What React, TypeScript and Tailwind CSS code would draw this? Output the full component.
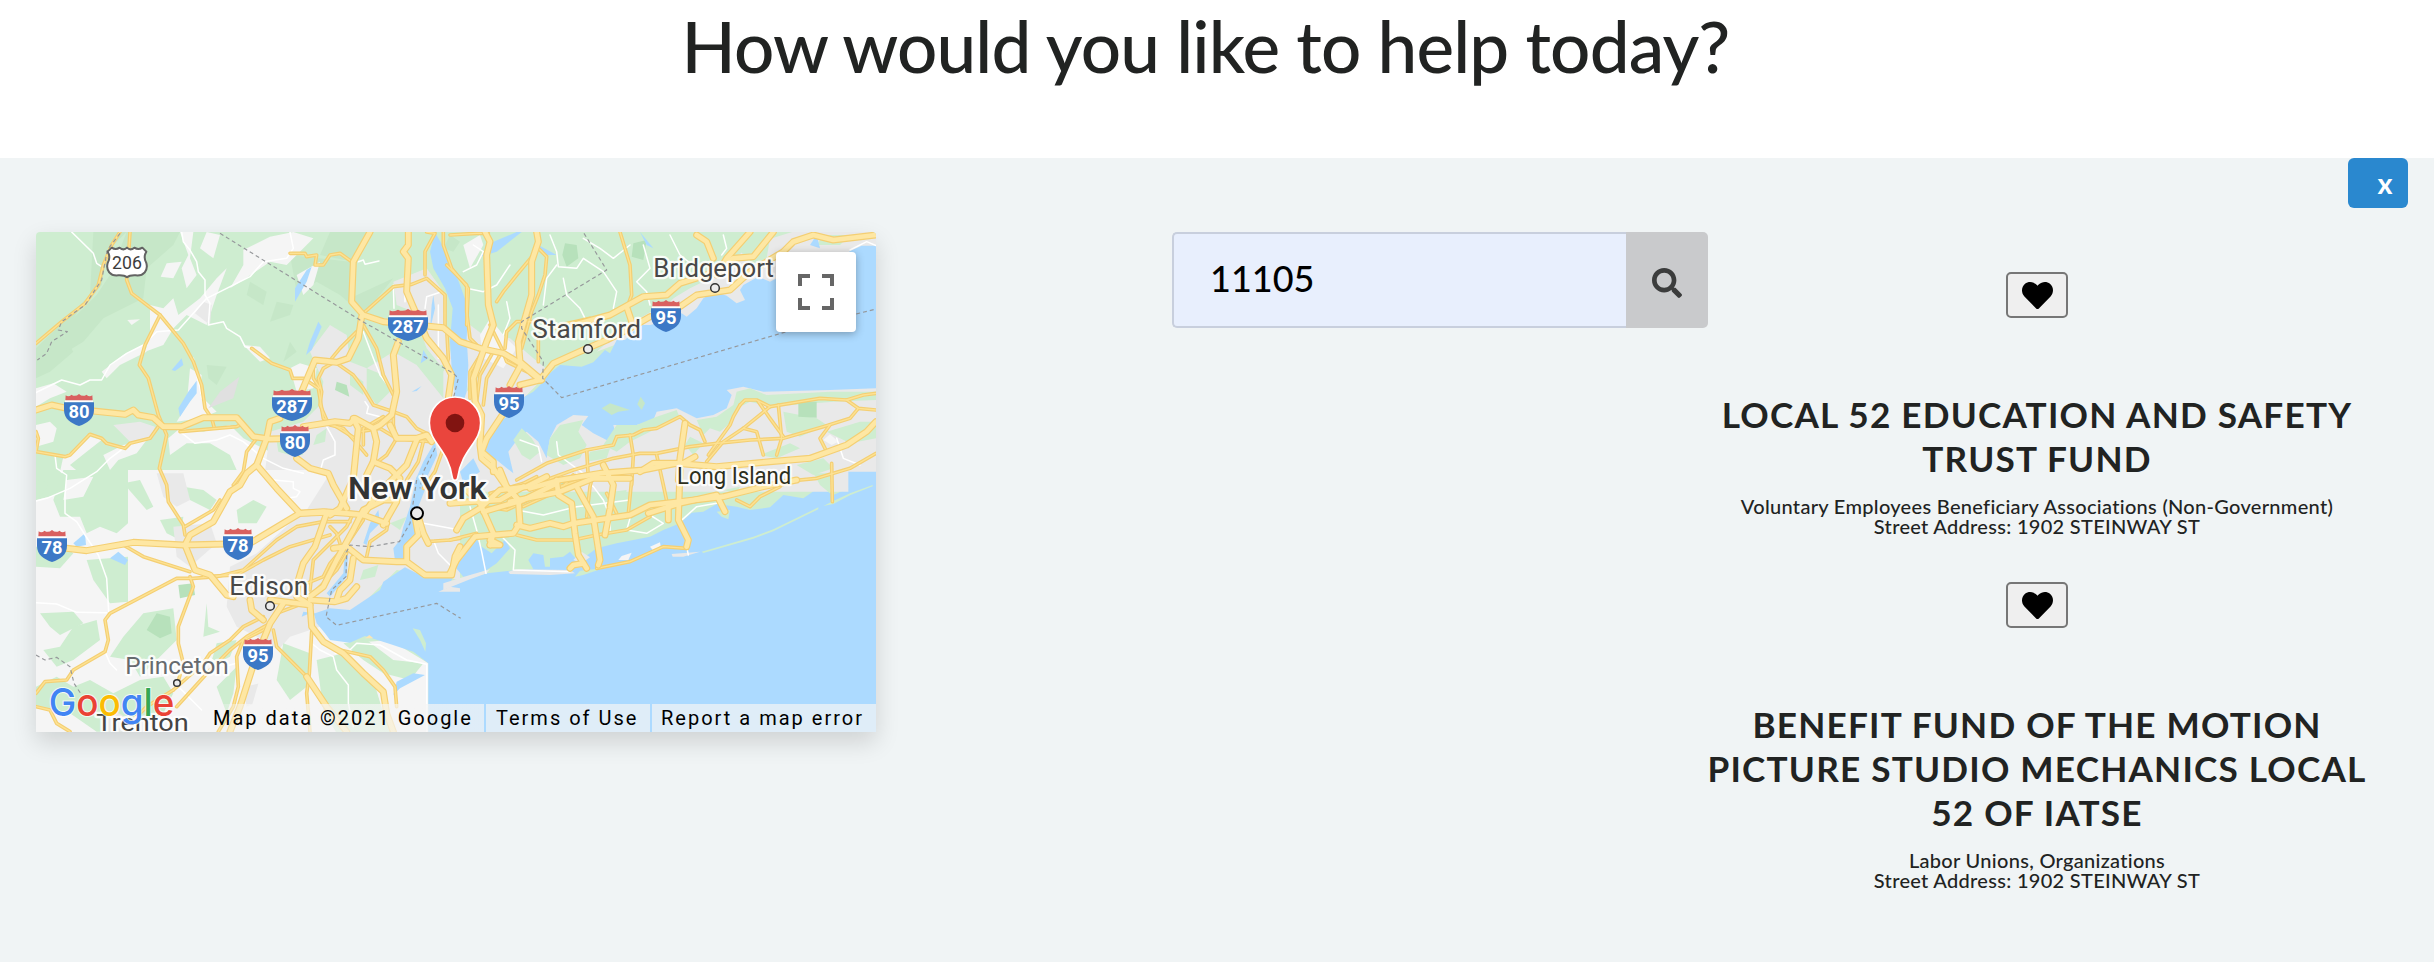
import React from "react";
import { FaHeart, FaSearch } from "react-icons/fa";

type Offset = [number, number];

// The map is drawn in four quadrants that share one coordinate space.
const NW: Offset = [0, 0];
const NE: Offset = [1260, 0];
const SW: Offset = [0, 765];
const SE: Offset = [1260, 765];

type Shape = { at: Offset; fill: string; pts: string };
type Line = { at: Offset; pts: string };

const GREEN = "#ceedd0";
const GREEN2 = "#c6e7c8";
const GREEN3 = "#b7e1bb";
const LIGHT = "#f5f5f5";
const URBAN = "#e9e9e9";
const WATER = "#acdaff";

const land: Shape[] = [
  { at: NW, fill: GREEN2, pts: "190,21 290,21 230,80 215,180 150,250 100,330 130,380 60,440 18,460 18,370 100,290 180,210" },
  { at: NW, fill: GREEN2, pts: "290,21 450,21 430,60 350,130 340,220 220,280 160,350 110,380 100,310 200,210 240,150" },
  { at: NW, fill: GREEN2, pts: "780,90 960,110 960,220 1090,160 1000,270 930,210 860,170 800,200" },
  { at: NW, fill: GREEN2, pts: "900,21 1030,21 970,110 870,90" },
  { at: NW, fill: GREEN2, pts: "660,170 710,200 700,240 650,210" },
  { at: NW, fill: GREEN2, pts: "740,230 790,240 780,270 720,290" },
  { at: NW, fill: GREEN2, pts: "780,350 800,380 760,410" },
  { at: NW, fill: GREEN2, pts: "530,420 590,425 560,480 535,460" },
  { at: NW, fill: LIGHT, pts: "450,21 490,21 480,100 500,150 470,190 455,130 475,90" },
  { at: NW, fill: LIGHT, pts: "530,21 570,30 550,100 510,70" },
  { at: NW, fill: LIGHT, pts: "410,115 455,110 430,160 392,155" },
  { at: NW, fill: LIGHT, pts: "360,240 400,250 430,220 445,270 510,220 560,160 590,130 560,210 530,300 470,270 420,320 360,350" },
  { at: NW, fill: URBAN, pts: "520,230 545,240 540,300 495,265" },
  { at: NW, fill: LIGHT, pts: "640,75 720,35 790,21 850,40 800,90 770,120 720,110 640,165 600,190 640,120" },
  { at: NW, fill: LIGHT, pts: "292,285 330,283 305,300" },
  { at: NW, fill: LIGHT, pts: "280,390 340,360 350,380 270,420 230,460 215,440" },
  { at: NW, fill: LIGHT, pts: "380,300 430,310 400,360 345,380 360,330" },
  { at: NW, fill: LIGHT, pts: "480,430 515,450 510,510 560,560 510,580 440,590 470,540" },
  { at: NW, fill: "#e0e0e0", pts: "628,455 610,520 535,550 570,500" },
  { at: NW, fill: LIGHT, pts: "18,490 70,475 110,500 60,520 18,545" },
  { at: NW, fill: LIGHT, pts: "18,600 60,590 80,610 70,650 18,665" },
  { at: NW, fill: LIGHT, pts: "100,695 150,665 180,635 215,645 170,680 120,720 150,745 120,765 90,740" },
  { at: NW, fill: LIGHT, pts: "220,690 280,660 350,645 320,685 265,705 240,735" },
  { at: NW, fill: URBAN, pts: "250,600 330,590 375,605 365,635 300,650" },
  { at: NW, fill: LIGHT, pts: "415,640 450,610 520,620 600,600 640,640 720,680 800,690 850,720 900,765 290,765 290,738 620,735 600,690 540,655 470,655 420,690" },
  { at: NW, fill: LIGHT, pts: "640,360 690,365 720,400 690,410" },
  { at: NW, fill: LIGHT, pts: "780,430 810,415 860,430 850,490 800,500" },
  { at: NW, fill: LIGHT, pts: "800,150 870,110 850,180 820,210" },
  { at: NW, fill: URBAN, pts: "840,380 900,300 950,330 960,410 1010,430 1090,380 1160,420 1240,520 1290,560 1290,780 700,780 720,620 820,590 870,540 880,470" },
  { at: NW, fill: URBAN, pts: "1090,170 1140,150 1190,130 1240,200 1245,300 1270,420 1230,420 1190,370 1150,260 1100,240" },
  { at: NW, fill: GREEN3, pts: "920,470 950,480 958,515 915,495" },
  { at: NW, fill: GREEN, pts: "1010,430 1060,450 1080,500 1040,540 1010,500" },
  { at: NW, fill: GREEN, pts: "960,440 1000,470 1000,510 960,480" },
  { at: NW, fill: GREEN, pts: "740,650 800,660 820,690 780,690 745,680" },
  { at: NW, fill: GREEN, pts: "860,630 890,610 885,650 850,660" },
  { at: SW, fill: LIGHT, pts: "18,60 100,40 160,60 290,-30 900,-30 900,765 18,765" },
  { at: SW, fill: GREEN, pts: "100,-30 294,-30 294,130 260,160 210,140 170,160 150,110 90,110 70,60" },
  { at: SW, fill: GREEN, pts: "18,0 60,10 20,60" },
  { at: SW, fill: LIGHT, pts: "110,0 190,-10 160,50 100,60" },
  { at: SW, fill: GREEN, pts: "18,200 90,190 130,220 90,265 18,260" },
  { at: SW, fill: GREEN, pts: "170,240 294,230 294,365 240,370 190,300" },
  { at: SW, fill: GREEN, pts: "30,400 130,395 160,430 90,465 60,440" },
  { at: SW, fill: GREEN, pts: "130,440 200,420 210,480 130,540 80,560 40,510 90,500" },
  { at: SW, fill: GREEN, pts: "340,400 430,385 440,480 380,540 330,590 300,540 240,530 280,470" },
  { at: SW, fill: GREEN3, pts: "380,400 420,410 425,460 390,475 350,450" },
  { at: SW, fill: GREEN3, pts: "445,315 490,310 495,345 450,355" },
  { at: SW, fill: GREEN, pts: "390,120 460,110 450,180 410,160" },
  { at: SW, fill: GREEN, pts: "280,10 330,0 370,80 350,90" },
  { at: SW, fill: GREEN, pts: "460,20 520,30 560,60 540,90 480,60" },
  { at: SW, fill: GREEN, pts: "620,90 670,60 710,80 680,130 625,130" },
  { at: SW, fill: GREEN, pts: "720,200 800,180 800,240 760,260 730,230" },
  { at: SW, fill: GREEN, pts: "530,370 535,440 570,455 520,470" },
  { at: SW, fill: GREEN, pts: "560,490 620,480 600,530 540,560" },
  { at: SW, fill: GREEN, pts: "18,620 80,590 130,620 180,600 250,640 330,600 400,590 430,640 400,700 300,755 200,755 120,700 18,680" },
  { at: SW, fill: URBAN, pts: "600,260 680,220 780,130 830,90 900,-20 1290,-20 1290,300 1100,270 1000,370 880,440 820,520 790,540 700,480 620,440 590,380" },
  { at: SW, fill: URBAN, pts: "380,-20 460,-20 480,60 440,80 400,50" },
  { at: SW, fill: URBAN, pts: "430,140 540,130 560,190 480,260 440,230" },
  { at: SW, fill: URBAN, pts: "220,720 250,690 300,720 360,700 380,755 230,755" },
  { at: SW, fill: URBAN, pts: "640,620 690,610 700,660 650,680" },
  { at: SW, fill: LIGHT, pts: "780,470 870,440 960,490 1080,480 1195,550 1195,765 640,765 700,560" },
  { at: SW, fill: GREEN, pts: "760,490 840,520 830,620 780,660 740,600" },
  { at: SW, fill: GREEN, pts: "860,540 940,520 1030,600 1060,700 1100,760 920,760 880,690" },
  { at: SW, fill: GREEN, pts: "940,490 1010,480 1090,540 1180,550 1140,600 1060,580 1000,540" },
  { at: SW, fill: GREEN, pts: "560,620 620,560 610,640 590,700" },
  { at: SW, fill: GREEN, pts: "1000,270 1045,255 1035,290 990,300" },
  { at: SW, fill: GREEN, pts: "1080,130 1130,110 1110,150" },
  { at: NE, fill: URBAN, pts: "-20,440 60,300 100,330 180,340 250,400 300,440 200,540 110,640 140,790 -20,790" },
  { at: NE, fill: LIGHT, pts: "90,330 120,280 160,330 200,370 160,430 100,400" },
  { at: NE, fill: LIGHT, pts: "40,60 90,30 100,60 60,130" },
  { at: NE, fill: GREEN2, pts: "0,30 30,50 10,80 -20,70" },
  { at: NE, fill: GREEN3, pts: "345,55 380,60 385,100 350,125 337,90" },
  { at: NE, fill: GREEN3, pts: "550,55 590,45 580,105 545,95" },
  { at: NE, fill: GREEN, pts: "60,440 90,430 80,470 50,500" },
  { at: NE, fill: URBAN, pts: "440,380 520,310 620,250 720,190 800,150 900,60 1030,20 1278,21 1278,80 900,230 600,320" },
  { at: NE, fill: GREEN, pts: "860,60 960,40 950,100 900,120" },
  { at: NE, fill: GREEN, pts: "560,240 650,200 700,190 660,230 590,260" },
  { at: NE, fill: GREEN, pts: "1120,30 1200,30 1170,60 1100,60" },
];

const water: Shape[] = [
  { at: NE, fill: WATER, pts: "1278,62 1235,62 1200,78 1180,98 1130,100 1040,130 960,170 925,155 880,180 870,195 885,225 860,235 830,212 795,200 760,220 740,250 710,275 695,265 640,290 600,300 570,300 545,325 525,345 500,345 480,385 465,375 430,412 395,425 330,420 300,445 280,470 250,500 215,520 190,560 150,590 125,625 108,640 105,680 140,705 150,740 190,765 250,765 290,790 1278,790" },
  { at: NE, fill: WATER, pts: "-45,21 -60,80 -50,130 -15,190 8,250 0,350 5,430 15,510 30,560 50,500 55,420 50,340 55,250 30,180 -5,90 -35,40" },
  { at: NE, fill: WATER, pts: "90,95 120,55 200,21 215,21 140,80" },
  { at: NE, fill: WATER, pts: "265,60 320,90 290,90 260,75" },
  { at: NE, fill: WATER, pts: "570,21 610,70 590,60" },
  { at: NE, fill: WATER, pts: "1080,60 1100,30 1110,70" },
  { at: NW, fill: WATER, pts: "845,125 830,170 795,230 795,190 830,135" },
  { at: NW, fill: WATER, pts: "865,290 875,305 845,375 828,390 840,350" },
  { at: NW, fill: WATER, pts: "425,435 455,400 460,420 435,438" },
  { at: NW, fill: WATER, pts: "500,467 500,505 480,530 450,575 445,550 475,500" },
  { at: NW, fill: WATER, pts: "1210,210 1215,250 1200,315 1205,240" },
  { at: NW, fill: WATER, pts: "1180,375 1195,400 1172,415" },
  { at: NW, fill: WATER, pts: "1145,500 1175,483 1160,498" },
  { at: NW, fill: WATER, pts: "1215,650 1222,690 1180,780 1150,780 1180,710" },
  { at: NW, fill: WATER, pts: "1290,740 1330,700 1350,740 1300,775" },
  { at: NW, fill: WATER, pts: "1145,660 1160,670 1140,725 1130,700" },
  { at: SW, fill: WATER, pts: "130,190 165,160 168,195 140,200" },
  { at: SW, fill: WATER, pts: "240,235 265,215 294,240 285,255" },
  { at: SW, fill: WATER, pts: "1160,-10 1200,-10 1165,80 1175,150 1140,200 1140,245 1095,242 1090,205 1110,180 1120,140 1140,80" },
  { at: SW, fill: WATER, pts: "1045,90 1050,130 1020,160 1010,195 1000,190 1020,130" },
  { at: SW, fill: WATER, pts: "945,210 955,210 950,290 900,350 890,340 940,280" },
  { at: SW, fill: WATER, pts: "1100,605 1150,580 1185,585 1110,625 1090,645" },
  { at: SW, fill: WATER, pts: "1125,262 1180,290 1270,290 1260,310 1340,310 1400,350 1400,800 1195,800 1195,550 1150,515 1080,492 1005,468 960,488 900,480 885,460 860,430 850,395 815,410 820,395 855,400 900,385 960,390 1050,330 1060,305" },
  { at: SE, fill: WATER, pts: "1278,-40 1195,-30 1195,25 1150,45 1110,20 1060,55 1000,45 960,82 900,90 860,80 800,72 760,95 725,98 690,130 640,150 600,170 500,190 440,205 385,245 360,215 340,230 300,235 300,260 285,260 280,225 250,220 235,240 250,268 180,272 110,280 60,295 -20,325 -20,765 1278,765" },
  { at: SE, fill: WATER, pts: "30,200 75,170 95,200 125,220 165,180 180,205 140,250 110,270 60,290 40,290 15,260" },
];

const islands: Shape[] = [
  { at: NE, fill: URBAN, pts: "175,680 205,640 230,620 265,650 290,700 300,640 320,600 370,570 415,573 395,600 430,625 480,650 500,640 490,600 560,600 610,585 620,560 680,550 740,580 790,570 830,550 845,510 830,495 880,485 940,500 1140,495 1278,490 1278,740 1195,740 1195,800 100,800 140,705 190,745" },
  { at: NE, fill: GREEN, pts: "300,640 330,600 400,585 385,620 410,660 390,700 340,720 290,690" },
  { at: NE, fill: GREEN, pts: "190,645 215,610 245,640 270,680 240,705 215,690" },
  { at: NE, fill: GREEN2, pts: "455,550 480,535 540,555 505,560 485,570" },
  { at: NE, fill: GREEN2, pts: "572,515 585,535 575,555 562,538" },
  { at: NE, fill: GREEN, pts: "500,600 560,600 620,575 680,555 690,580 600,620 540,650 500,680 460,660" },
  { at: NE, fill: GREEN, pts: "740,585 800,575 850,540 860,500 900,490 950,510 1140,500 1278,500 1278,525 1150,530 960,545 900,530 870,545 845,590 810,620 780,610 760,630" },
  { at: NE, fill: GREEN, pts: "1000,560 1100,580 1130,600 1050,635 1010,620" },
  { at: NE, fill: GREEN, pts: "720,635 760,655 730,690 705,660" },
  { at: NE, fill: GREEN, pts: "930,690 1020,655 1050,670 980,700" },
  { at: NE, fill: GREEN3, pts: "1045,530 1100,530 1100,578 1045,575" },
  { at: NE, fill: GREEN, pts: "420,680 480,670 470,700 410,710" },
  { at: NE, fill: GREEN, pts: "1130,620 1230,590 1278,590 1278,640 1200,655" },
  { at: NE, fill: LIGHT, pts: "1120,645 1140,628 1165,650 1145,660" },
  { at: NE, fill: GREEN, pts: "1040,720 1120,700 1150,730 1090,750" },
  { at: SE, fill: GREEN3, pts: "340,-5 380,-10 365,20 330,20" },
  { at: SE, fill: GREEN, pts: "490,35 530,30 525,55 500,58" },
  { at: SE, fill: GREEN, pts: "800,95 840,90 835,118 815,110" },
  { at: SE, fill: GREEN, pts: "1090,-20 1140,-20 1140,40 1110,15" },
  { at: SE, fill: GREEN, pts: "820,30 870,20 860,40" },
  { at: SE, fill: URBAN, pts: "-20,310 60,285 120,268 110,280 60,298 -20,330" },
  { at: SE, fill: URBAN, pts: "175,275 200,268 360,270 375,280 300,285 180,282" },
  { at: SE, fill: GREEN, pts: "375,290 390,272 430,268 460,265 400,285" },
  { at: SE, fill: LIGHT, pts: "600,200 630,187 632,197 610,212" },
  { at: SE, fill: LIGHT, pts: "505,240 515,228 545,218 535,240" },
  { at: SE, fill: URBAN, pts: "370,240 395,215 420,232 395,250" },
  { at: SE, fill: URBAN, pts: "665,222 750,215 700,230 668,230" },
  { at: SE, fill: GREEN, pts: "755,215 910,170 970,148 1105,82 1105,88 970,154 910,176 760,219" },
  { at: SE, fill: GREEN, pts: "1120,78 1145,65 1200,40 1268,15 1268,19 1200,46 1150,72" },
  { at: SW, fill: GREEN, pts: "1148,445 1170,450 1188,490 1186,515 1170,480" },
  { at: SW, fill: URBAN, pts: "1225,335 1260,320 1290,325 1290,335" },
  { at: SW, fill: "#fbe5b5", pts: "1005,475 1018,465 1030,475" },
];

const whiteRoads: Line[] = [
  { at: NW, pts: "125,21 190,85 200,115 215,125" },
  { at: NW, pts: "455,21 460,50 480,75 500,110 505,140 525,165 525,210 540,235 535,300 580,290 590,310 630,335 645,365 665,370" },
  { at: NW, pts: "700,110 660,155 590,190 530,220 490,265 445,315 380,320 340,360 290,385 240,420 215,465 180,465 150,480 95,465 18,503" },
  { at: NW, pts: "700,110 770,100 790,70 780,21" },
  { at: NW, pts: "985,110 1000,105 1005,118 1047,108" },
  { at: NW, pts: "490,400 500,450 510,490 515,520" },
  { at: NW, pts: "1090,180 1092,250" },
  { at: NW, pts: "1125,170 1125,230" },
  { at: NW, pts: "1185,250 1190,215 1235,200" },
  { at: NW, pts: "1225,240 1225,400" },
  { at: NW, pts: "1000,320 1030,400 1050,450 1080,490" },
  { at: NW, pts: "450,620 495,655 560,645 600,630 640,650 700,700 760,730 820,745" },
  { at: NW, pts: "890,605 915,650 915,690 880,705 870,740" },
  { at: NW, pts: "75,690 80,730 110,750 105,810 105,865 140,890 165,930 205,990 230,1060 236,1160" },
  { at: NW, pts: "280,670 240,700 200,740 120,790 50,820 18,828" },
  { at: NW, pts: "1005,530 1015,545 1010,565 1050,575 1055,590" },
  { at: SW, pts: "18,368 80,372 140,397 230,398" },
  { at: SW, pts: "225,515 240,550 260,570" },
  { at: SW, pts: "450,625 515,690" },
  { at: SW, pts: "730,0 790,5 790,25 810,35 800,50 770,55" },
  { at: SW, pts: "845,490 870,510 910,530 920,570 955,615 955,670 970,740" },
  { at: SW, pts: "915,520 950,520 980,490 1050,495 1130,540 1190,553 1190,765" },
  { at: SW, pts: "540,535 580,560 620,550" },
  { at: SW, pts: "1180,130 1290,150" },
  { at: SW, pts: "1210,180 1225,220 1260,255" },
  { at: NE, pts: "300,30 320,80 325,125 380,130 400,100 460,140" },
  { at: NE, pts: "320,120 290,160 280,240" },
  { at: NE, pts: "340,160 350,210 390,250 410,290" },
  { at: NE, pts: "400,40 450,70 490,100 540,60" },
  { at: NE, pts: "580,60 600,130 560,170 590,200 600,240" },
  { at: NE, pts: "660,30 690,90 740,130" },
  { at: NE, pts: "460,140 500,200 490,250" },
  { at: NE, pts: "40,140 80,120 100,80 70,60" },
  { at: NE, pts: "50,190 100,200 140,180 180,120" },
  { at: NE, pts: "170,230 180,280 160,330" },
  { at: NE, pts: "210,645 265,665 275,710" },
  { at: NE, pts: "320,650 325,690 400,745" },
  { at: NE, pts: "1160,640 1180,700 1230,720" },
  { at: NE, pts: "1200,75 1250,50 1278,62" },
  { at: NE, pts: "820,30 830,70 815,90" },
  { at: SE, pts: "200,90 280,105 380,80 540,60" },
  { at: SE, pts: "380,-20 430,20 460,60 480,110 480,160" },
  { at: SE, pts: "60,80 80,150 95,215 108,280" },
  { at: SE, pts: "160,175 195,210 190,270 360,275" },
  { at: SE, pts: "540,115 530,150 590,160 640,130 600,105" },
  { at: SE, pts: "715,225 710,200" },
  { at: SE, pts: "690,125 740,80 800,70" },
];

const minorRoads: Line[] = [
  { at: NW, pts: "270,21 245,60 220,120 205,180 165,235 95,290 18,355" },
  { at: NW, pts: "300,21 295,100 290,165 305,205 390,270 345,360 328,420 355,460 385,570 410,630 388,730 410,780 415,830 460,900 465,930" },
  { at: NW, pts: "390,270 460,355 490,410 515,480 525,550 545,580 552,605" },
  { at: NW, pts: "665,370 725,415 780,435 788,460 820,460 865,490 880,580 975,640" },
  { at: NW, pts: "780,85 825,85 830,95 860,90 855,120 880,120 900,90 930,85 965,110" },
  { at: NW, pts: "18,620 25,640 18,680 105,695 120,690 180,628 215,640 230,655 285,670 300,655 360,640 385,605" },
  { at: NW, pts: "1000,265 1090,185 1145,178 1190,160 1245,210 1245,305" },
  { at: NW, pts: "980,320 930,370 905,400" },
  { at: NW, pts: "1000,300 1040,370 1060,450 1090,510" },
  { at: NW, pts: "920,415 970,450 1000,490 1030,540 1090,560 1130,575 1160,610 1190,625" },
  { at: NW, pts: "850,410 850,460 870,490" },
  { at: NW, pts: "915,410 880,430 865,460 875,500 870,540 890,585" },
  { at: NW, pts: "450,620 560,610 620,605 640,595" },
  { at: NW, pts: "680,640 650,680 640,740 610,780" },
  { at: NW, pts: "900,600 940,610 985,660 1010,690" },
  { at: NW, pts: "990,620 1050,610 1100,640 1200,650" },
  { at: NW, pts: "1090,560 1090,600 1100,640 1070,690 1030,720" },
  { at: NW, pts: "1060,575 1000,610 1000,660" },
  { at: NW, pts: "1190,21 1215,25 1185,80 1185,150" },
  { at: NW, pts: "1240,21 1240,60 1265,130 1290,160 1315,190 1310,300" },
  { at: NW, pts: "1250,310 1255,400 1250,420" },
  { at: NW, pts: "1130,640 1180,650 1165,710 1130,765" },
  { at: NW, pts: "1240,670 1215,740 1180,790" },
  { at: NE, pts: "0,30 80,25 115,25" },
  { at: NE, pts: "250,90 200,150 160,200 140,230" },
  { at: NE, pts: "265,70 290,95 285,150 265,210 245,260 215,370" },
  { at: NE, pts: "510,21 540,120 545,210 530,250" },
  { at: NE, pts: "-10,120 50,180 50,260 60,340 90,370" },
  { at: NE, pts: "120,300 155,370 170,410 230,440" },
  { at: NE, pts: "165,370 170,320 200,290 255,290" },
  { at: NE, pts: "110,360 60,440 60,520" },
  { at: NE, pts: "130,380 90,450 80,530" },
  { at: NE, pts: "150,390 110,460 100,540" },
  { at: NE, pts: "265,410 265,340 330,300 420,280" },
  { at: NE, pts: "200,765 290,715 410,675 490,660 500,635 550,630 580,615 620,610 690,575 720,600 750,615 765,650" },
  { at: NE, pts: "260,775 370,735 490,700 570,685 620,685 720,665 800,655 900,645 1000,640 1120,605 1200,580 1225,550" },
  { at: NE, pts: "870,540 850,575 840,600 775,690" },
  { at: NE, pts: "870,540 885,525 920,525 960,545 1110,520 1190,525" },
  { at: NE, pts: "1278,505 1240,510 1190,525 1225,550 1278,555" },
  { at: NE, pts: "925,530 960,580 1000,635" },
  { at: NE, pts: "985,540 995,640 980,690" },
  { at: NE, pts: "960,545 880,610 820,650 770,710" },
  { at: NE, pts: "880,610 920,620 940,690" },
  { at: NE, pts: "1140,600 1110,640 1130,680" },
  { at: NE, pts: "1278,685 1200,730 1100,760 1000,770" },
  { at: NE, pts: "410,675 415,760" },
  { at: NE, pts: "540,630 550,690 545,780" },
  { at: NE, pts: "620,690 640,780 655,850" },
  { at: SW, pts: "465,140 550,90 570,60" },
  { at: SW, pts: "280,195 340,230 480,275" },
  { at: SW, pts: "18,640 45,605 110,600 130,570 225,515 235,480 225,420 240,400 440,295 490,295 560,290 640,270 740,180 800,140 880,125 960,125" },
  { at: SW, pts: "480,290 490,320 445,440 445,490 460,550 440,620" },
  { at: SW, pts: "520,290 620,285 700,240 780,200 900,165" },
  { at: SW, pts: "700,410 640,440 600,480 540,520 520,550 430,630" },
  { at: SW, pts: "720,430 650,470 600,510 540,570 440,680" },
  { at: SW, pts: "820,370 740,400 700,450 640,480 620,530 625,620 610,680 565,755" },
  { at: SW, pts: "730,450 740,500 830,590 890,690" },
  { at: SW, pts: "845,455 838,580 830,640 840,755" },
  { at: SW, pts: "930,510 1020,530 1060,570 1095,620 1100,680" },
  { at: SW, pts: "830,310 880,290 900,250 960,180 1000,120" },
  { at: SW, pts: "840,330 850,240 900,190 950,140 970,100" },
  { at: SW, pts: "860,330 920,270 950,220" },
  { at: SW, pts: "1010,230 1020,185 1070,150 1080,90" },
  { at: SW, pts: "18,680 60,690 80,730 120,755" },
  { at: SW, pts: "430,630 350,680 300,730" },
  { at: SW, pts: "900,140 920,160 930,190" },
  { at: SW, pts: "1190,185 1260,180 1290,175" },
  { at: SE, pts: "200,165 260,180 370,180 440,165 530,150 600,110" },
  { at: SE, pts: "440,265 540,245 640,200 710,205" },
  { at: SE, pts: "370,-15 330,30 220,80" },
  { at: SE, pts: "120,40 220,10 260,-10" },
  { at: SE, pts: "100,80 170,90 300,30 420,-10" },
  { at: SE, pts: "410,110 420,20 430,-20" },
  { at: SE, pts: "470,40 500,100" },
  { at: SE, pts: "545,0 535,100" },
  { at: SE, pts: "860,60 900,80 930,50 990,20" },
  { at: SE, pts: "1145,-50 1147,65" },
  { at: SE, pts: "0,180 80,160" },
];

const majorRoads: Line[] = [
  { at: NW, pts: "1020,21 970,110 965,230 1000,270 1060,290 1240,308 1290,350 1350,370 1420,385 1470,415 1530,465" },
  { at: NW, pts: "1135,21 1135,60 1120,80 1135,100 1130,200 1160,270 1190,340 1240,400 1265,450 1255,520" },
  { at: NW, pts: "995,275 985,340 955,400 920,412 855,405 815,500" },
  { at: NW, pts: "1105,350 1090,390 1100,500 1085,570 1050,600 1030,610 975,580 960,595 915,590 820,605" },
  { at: NW, pts: "18,555 65,540 110,550 285,568 310,555 325,570 370,578 400,605 455,605 520,578 620,578 670,635 720,642 800,640" },
  { at: NW, pts: "750,580 720,590 710,640 680,720 650,745 630,780 600,800 550,890 480,930 465,960 495,1035 540,1050 590,1110 610,1115" },
  { at: NW, pts: "680,720 740,790 810,865 880,860 950,865 1000,870 1070,895" },
  { at: NW, pts: "800,700 840,730 895,745 910,780 950,850" },
  { at: NW, pts: "970,580 985,610 970,760 930,850 900,870" },
  { at: NW, pts: "1030,610 1040,650 1030,710 1080,730 1110,760 1100,830 1060,900" },
  { at: NW, pts: "1080,600 1100,640 1160,640 1190,630 1205,650" },
  { at: NW, pts: "1160,645 1130,720 1040,810 1000,870" },
  { at: NW, pts: "1030,710 1010,750 1010,800" },
  { at: SW, pts: "110,205 170,212 310,187 460,195 590,192 660,190 810,100 890,97" },
  { at: SW, pts: "890,100 855,200 820,250 805,300 800,350 840,375" },
  { at: SW, pts: "660,360 665,390 700,420" },
  { at: SW, pts: "720,360 840,375 845,440 880,485 940,520 1000,580 1060,635 1070,700 1090,755" },
  { at: SW, pts: "980,320 950,355 915,365 840,360" },
  { at: SW, pts: "760,370 720,430 700,480 665,570 630,680 600,755" },
  { at: SW, pts: "830,590 890,680 950,755" },
  { at: SW, pts: "840,350 880,320 920,240 970,150 1000,90 1060,60 1100,60" },
  { at: SW, pts: "910,205 950,200 1000,240 1100,245 1130,245 1185,285 1265,285 1275,230 1290,200" },
  { at: SW, pts: "970,235 960,300 930,330 920,360" },
  { at: SW, pts: "1155,110 1165,165 1130,200 1130,245" },
  { at: SW, pts: "1165,110 1180,160 1195,190" },
  { at: NE, pts: "105,21 120,50 110,90 115,240 130,300 110,350 70,460 75,530 95,570 90,660 95,700 130,730 165,780 210,830" },
  { at: NE, pts: "260,21 265,50 245,110 245,210 205,350 210,410 275,465" },
  { at: NE, pts: "210,425 180,480" },
  { at: NE, pts: "160,565 110,640 95,680 130,710 130,740" },
  { at: NE, pts: "210,480 270,465 310,415 400,375 470,345 540,310 600,275" },
  { at: NE, pts: "370,300 480,270 580,215 650,210 690,175 770,150 850,100 910,95 970,21" },
  { at: NE, pts: "690,245 740,210 840,195 900,140 1000,80 1030,50 1090,30 1150,45 1278,30" },
  { at: NE, pts: "740,30 770,50 790,100" },
  { at: NE, pts: "900,21 830,100 800,150" },
  { at: NE, pts: "530,245 545,290" },
  { at: NE, pts: "240,790 330,765 450,745 580,735 680,715 800,725 960,710 1080,700 1190,660 1250,620 1278,590" },
  { at: NE, pts: "705,595 690,700 685,765" },
  { at: NE, pts: "735,695 700,715 610,715 570,740" },
  { at: NE, pts: "460,720 490,780 480,850 465,930" },
  { at: NE, pts: "540,760 430,760 330,800 180,830" },
  { at: SE, pts: "0,280 20,240 75,170 190,160 210,130 205,60 170,20 150,-30" },
  { at: SE, pts: "200,135 240,145 300,130 340,140 370,130 540,105 600,75 820,50 940,20 1040,0" },
  { at: SE, pts: "20,150 40,115 90,85 150,30 230,20 290,-10" },
  { at: SE, pts: "120,195 130,160 90,70 50,30" },
  { at: SE, pts: "320,0 325,45 365,70 375,160 385,225 410,265" },
  { at: SE, pts: "380,20 430,110 450,240 445,255" },
  { at: SE, pts: "360,265 370,255 400,250" },
  { at: SE, pts: "595,100 690,70 800,45 825,95" },
  { at: SE, pts: "655,75 655,120" },
  { at: SE, pts: "690,-30 685,120 715,180 710,200" },
  { at: SE, pts: "0,70 60,65 150,60 220,20" },
  { at: SE, pts: "120,180 150,195 120,195" },
  { at: SE, pts: "320,10 220,60 100,95" },
];

const boundaries: Line[] = [
  { at: NW, pts: "270,25 232,75 215,165 165,240 95,290 85,315 112,320 65,350 50,385 22,405" },
  { at: NW, pts: "570,25 990,285 1270,445 1285,460 1270,520" },
  { at: NE, pts: "402,25 470,135 215,290 215,310 280,410 278,460 335,518 480,475 1010,320 1278,252" },
  { at: SW, pts: "1160,0 1140,130 1108,185 1020,200 960,195 950,215 948,290 905,330 888,410 920,436 1220,370 1292,415" },
  { at: SW, pts: "18,525 45,540 80,532 120,560 132,610 155,645" },
  { at: NW, pts: "1215,670 1180,740 1170,790" },
];

const shift = ([x, y]: Offset) => `translate(${x} ${y})`;

function Polygons({ items }: { items: Shape[] }) {
  return (
    <>
      {items.map((s, i) => (
        <polygon key={i} points={s.pts} fill={s.fill} transform={shift(s.at)} />
      ))}
    </>
  );
}

function Lines({ items, color, width, dash }: { items: Line[]; color: string; width: number; dash?: string }) {
  return (
    <g fill="none" stroke={color} strokeWidth={width} strokeLinejoin="round" strokeLinecap={dash ? "butt" : "round"} strokeDasharray={dash}>
      {items.map((l, i) => (
        <polyline key={i} points={l.pts} transform={shift(l.at)} />
      ))}
    </g>
  );
}

function Interstate({ x, y, n }: { x: number; y: number; n: string }) {
  const k = n.length > 2 ? 60 : 45;
  return (
    <g transform={`translate(${x} ${y})`}>
      <path
        d={`M${-k + 5} -44Q${-k + 14} -38 ${-k / 2} -46Q${-k / 4} -38 0 -48Q${k / 4} -38 ${k / 2} -46Q${k - 14} -38 ${k - 5} -44L${k - 4} -28H${-k + 4}Z`}
        fill="#d9605f"
      />
      <rect x={-k + 3} y={-29} width={k * 2 - 6} height={6} fill="#fff" />
      <path d={`M${-k} -23H${k}V0C${k} 26 ${k * 0.55} 40 0 48C${-k * 0.55} 40 ${-k} 26 ${-k} 0Z`} fill="#3c78c6" />
      <text x={0} y={25} textAnchor="middle" fontSize={55} fontWeight={700} fill="#fff">
        {n}
      </text>
    </g>
  );
}

function Place(p: { x: number; y: number; w: number; size: number; name: string; weight?: number; fill?: string; dot?: [number, number, number] }) {
  const fill = p.fill ?? "#484848";
  return (
    <g>
      {p.dot && <circle cx={p.dot[0]} cy={p.dot[1]} r={p.dot[2]} fill="#ececec" stroke={p.dot[2] > 15 ? "#000" : "#333"} strokeWidth={p.dot[2] > 15 ? 6 : 4.5} />}
      <text
        x={p.x}
        y={p.y}
        textLength={p.w}
        lengthAdjust="spacingAndGlyphs"
        fontSize={p.size}
        fontWeight={p.weight ?? 400}
        fill={fill}
        stroke="#fff"
        strokeOpacity={0.85}
        strokeWidth={14}
        strokeLinejoin="round"
        paintOrder="stroke"
      >
        {p.name}
      </text>
    </g>
  );
}

function MapDrawing() {
  return (
    <svg viewBox="18 21 2520 1500" className="block h-[500px] w-[840px]" fontFamily="Roboto, 'Liberation Sans', sans-serif">
      <rect x={18} y={21} width={2520} height={1500} fill={GREEN} />
      <Polygons items={land} />
      <Polygons items={water} />
      <Polygons items={islands} />
      <Lines items={whiteRoads} color="#ffffff" width={4.5} />
      <Lines items={minorRoads} color="#f4cf73" width={11} />
      <Lines items={minorRoads} color="#fde293" width={4} />
      <Lines items={majorRoads} color="#f4cf73" width={21} />
      <Lines items={majorRoads} color="#fee7a3" width={14} />
      <Lines items={boundaries} color="#96989b" width={3.5} dash="12 9" />

      <g transform="translate(291 110)">
        <path
          d="M-46 -42Q-34 -34 -22 -42Q-10 -32 0 -42Q10 -32 22 -42Q34 -34 46 -42L58 -30Q48 -14 58 4C64 26 50 44 26 41Q8 40 0 47Q-8 40 -26 41C-50 44 -64 26 -58 4Q-48 -14 -58 -30Z"
          fill="#fff"
          stroke="#636363"
          strokeWidth={6}
          strokeLinejoin="round"
        />
        <text x={0} y={22} textAnchor="middle" fontSize={53} fill="#3c3c3c">
          206
        </text>
      </g>
      <Interstate x={1134} y={300} n="287" />
      <Interstate x={786} y={540} n="287" />
      <Interstate x={147} y={555} n="80" />
      <Interstate x={795} y={648} n="80" />
      <Interstate x={1908} y={273} n="95" />
      <Interstate x={1437} y={531} n="95" />
      <Interstate x={66} y={963} n="78" />
      <Interstate x={624} y={957} n="78" />
      <Interstate x={684} y={1287} n="95" />

      <Place x={1870} y={157} w={362} size={76} name="Bridgeport" dot={[2055, 189, 13]} />
      <Place x={1507} y={340} w={326} size={76} name="Stamford" dot={[1674, 372, 13]} />
      <Place x={598} y={1110} w={237} size={76} name="Edison" dot={[720, 1143, 13]} />
      <Place x={286} y={1347} w={310} size={70} name="Princeton" fill="#666a6e" dot={[441, 1374, 10]} />
      <Place x={1941} y={777} w={343} size={69} name="Long Island" fill="#2d2f1d" />
      <Place x={199} y={1518} w={277} size={69} name="Trenton" fill="#444" />

      <path
        d="M1275 516C1231 516 1198 551 1198 594C1198 655 1254 670 1267 758Q1268 766 1275 766Q1282 766 1283 758C1296 670 1352 655 1352 594C1352 551 1319 516 1275 516Z"
        fill="#ea453d"
        stroke="#fff"
        strokeWidth={5}
      />
      <circle cx={1275} cy={594} r={28} fill="#811411" />
      <Place x={954} y={822} w={416} size={93} name="New York" weight={600} fill="#333" dot={[1161, 865, 18]} />

      <g transform="translate(56 1473) scale(0.96 1)">
        <text x={0} y={0} fontSize={115} fontWeight={500} fontFamily="Inter, Roboto, sans-serif" stroke="#fff" strokeOpacity={0.75} strokeWidth={6} paintOrder="stroke">
          <tspan fill="#4285f4">G</tspan>
          <tspan fill="#ea4335">o</tspan>
          <tspan fill="#fbbc05">o</tspan>
          <tspan fill="#4285f4">g</tspan>
          <tspan fill="#34a853">l</tspan>
          <tspan fill="#ea4335">e</tspan>
        </text>
      </g>
    </svg>
  );
}

function MapPanel() {
  return (
    <div className="relative h-[500px] w-[840px] shrink-0 overflow-hidden rounded-t-[4px] shadow-[0_10px_24px_rgba(0,0,0,0.14)]">
      <MapDrawing />
      <button className="absolute top-5 right-5 flex h-20 w-20 items-center justify-center rounded-[4px] bg-white shadow-[0_2px_8px_rgba(0,0,0,0.3)]">
        <svg viewBox="0 0 36 36" className="h-9 w-9" fill="none" stroke="#666" strokeWidth={4}>
          <path d="M2 12V2H12M24 2H34V12M34 24V34H24M12 34H2V24" />
        </svg>
      </button>
      <div className="absolute right-0 bottom-0 flex h-7 gap-[2px] font-[Roboto] text-[20px] leading-7 tracking-[2px] whitespace-nowrap text-black">
        <span className="w-[276px] bg-gradient-to-r from-[#f5f5f500] to-[#f5f5f5b3] to-15% pr-[12px] pl-[5px] text-right">Map data ©2021 Google</span>
        <span className="w-[164px] bg-[#f5f5f5b3] pl-[10px]">Terms of Use</span>
        <span className="w-[224px] bg-[#f5f5f5b3] pl-[9px]">Report a map error</span>
      </div>
    </div>
  );
}

function Result({ lines, kind }: { lines: string[]; kind: string }) {
  return (
    <article className="flex flex-col items-center text-center text-[#212322]">
      <button className="flex h-[46px] w-[62px] items-center justify-center rounded-[5px] border-2 border-[#767676] bg-[#efefef] text-black">
        <FaHeart className="h-[31px] w-[31px]" />
      </button>
      <h2 className="mt-[74px] text-[35.2px] leading-[44px] font-bold tracking-[1.2px] whitespace-nowrap">
        {lines.map((l) => (
          <span key={l} className="block">
            {l}
          </span>
        ))}
      </h2>
      <p className="mt-4 text-[20px] leading-5 font-medium tracking-[0.3px] whitespace-nowrap">
        {kind}
        <br />
        Street Address: 1902 STEINWAY ST
      </p>
    </article>
  );
}

export default function App() {
  return (
    <div className="flex h-[962px] w-[2434px] flex-col overflow-hidden bg-white font-[Lato,sans-serif]">
      <header className="flex h-[158px] justify-center">
        <h1 className="mt-[2px] ml-[-23px] text-[71px] leading-[88px] font-medium tracking-[-0.85px] whitespace-nowrap text-[#212322]">How would you like to help today?</h1>
      </header>
      <main className="flex flex-1 flex-col bg-[#f0f4f5]">
        <div className="flex h-[50px] justify-end pr-[26px]">
          <button className="h-[50px] w-[60px] rounded-[6px] bg-[#2a88cf] pt-[4px] pl-[14px] text-[21px] leading-none font-extrabold text-white">X</button>
        </div>
        <div className="flex items-start pt-6 pl-9">
          <MapPanel />
          <form className="ml-[296px] flex h-24 w-[536px] shrink-0">
            <div className="flex flex-1 items-center rounded-l-[5px] border-2 border-r-0 border-[#c8cfdd] bg-[#e8effd] pb-1 pl-9 text-[36px] font-medium text-black">11105</div>
            <button type="button" className="flex w-[82px] items-center justify-center rounded-r-[5px] bg-[#c9cacc] pt-[6px] text-[#3b3c3c]">
              <FaSearch className="h-[30px] w-[30px]" />
            </button>
          </form>
          <div className="flex w-[658px] shrink-0 flex-col gap-[46px] pt-10">
            <Result lines={["LOCAL 52 EDUCATION AND SAFETY", "TRUST FUND"]} kind="Voluntary Employees Beneficiary Associations (Non-Government)" />
            <Result lines={["BENEFIT FUND OF THE MOTION", "PICTURE STUDIO MECHANICS LOCAL", "52 OF IATSE"]} kind="Labor Unions, Organizations" />
          </div>
        </div>
      </main>
    </div>
  );
}
